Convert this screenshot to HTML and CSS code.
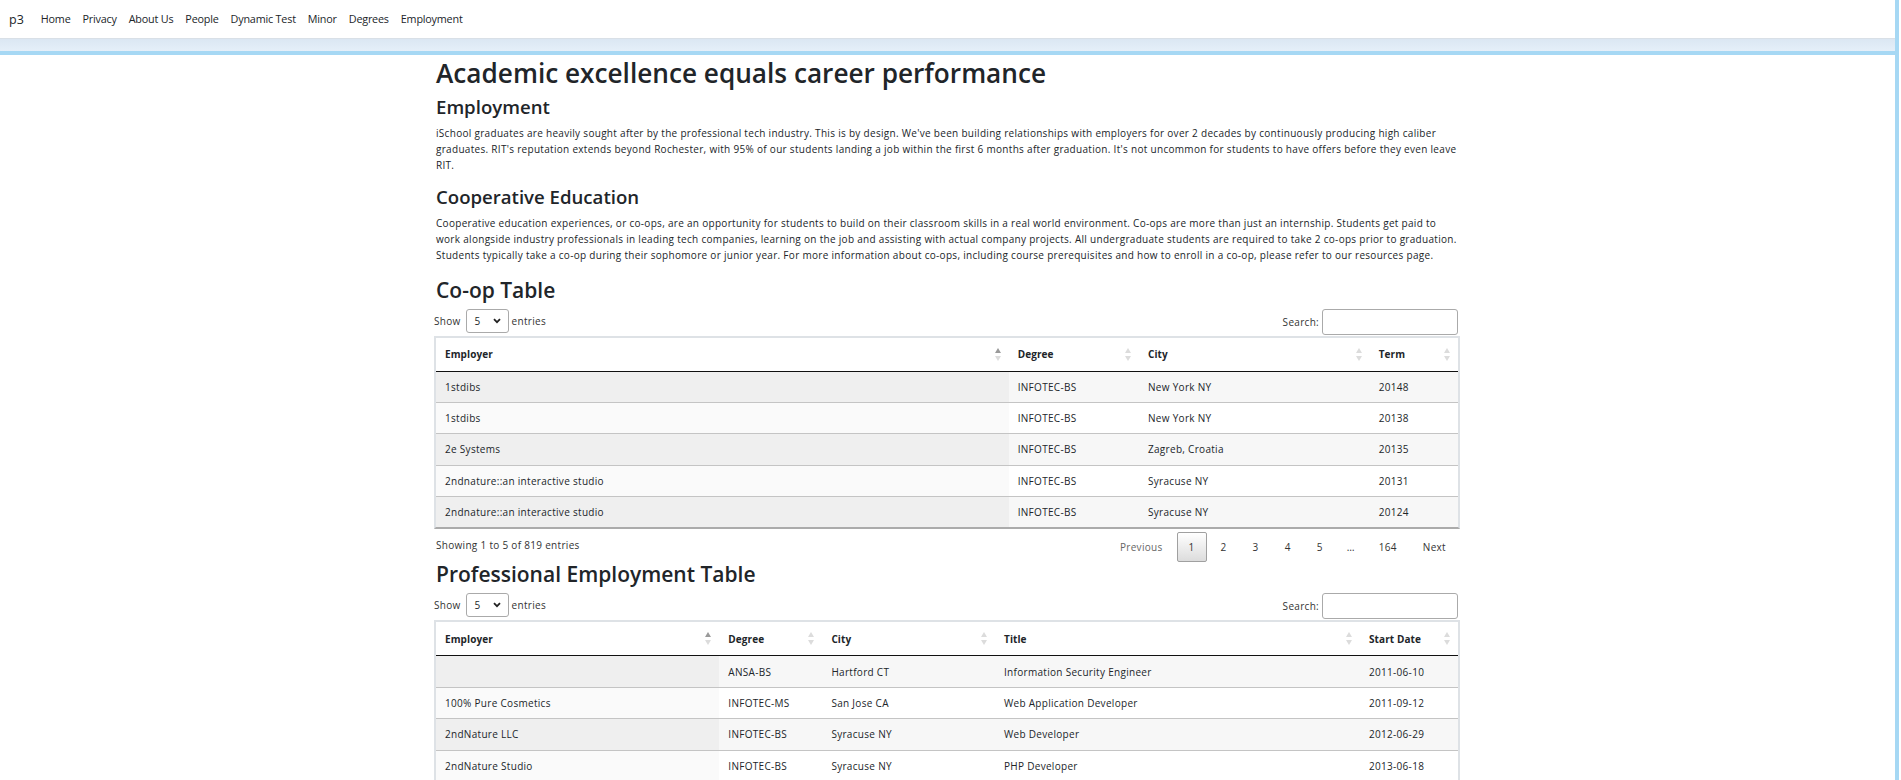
FILE: index.html
```html
<!DOCTYPE html>
<html lang="en">
<head>
<meta charset="utf-8">
<title>Employment</title>
<link rel="stylesheet" href="styles.css">
</head>
<body>
<div class="page">
  <div class="main">
    <header class="topbar">
      <nav class="navbar">
        <a class="brand" href="#">p3</a>
        <ul class="nav">
          <li><a href="#">Home</a></li>
          <li><a href="#">Privacy</a></li>
          <li><a href="#">About Us</a></li>
          <li><a href="#">People</a></li>
          <li><a href="#">Dynamic Test</a></li>
          <li><a href="#">Minor</a></li>
          <li><a href="#">Degrees</a></li>
          <li><a href="#">Employment</a></li>
        </ul>
      </nav>
      <div class="band"></div>
    </header>
    <div class="content">
      <main class="container">
        <h1>Academic excellence equals career performance</h1>
        <h3>Employment</h3>
        <p>iSchool graduates are heavily sought after by the professional tech industry. This is by design. We've been building relationships with employers for over 2 decades by continuously producing high caliber<br>graduates. RIT's reputation extends beyond Rochester, with 95% of our students landing a job within the first 6 months after graduation. It's not uncommon for students to have offers before they even leave<br>RIT.</p>
        <h3>Cooperative Education</h3>
        <p class="last-p">Cooperative education experiences, or co-ops, are an opportunity for students to build on their classroom skills in a real world environment. Co-ops are more than just an internship. Students get paid to<br>work alongside industry professionals in leading tech companies, learning on the job and assisting with actual company projects. All undergraduate students are required to take 2 co-ops prior to graduation.<br>Students typically take a co-op during their sophomore or junior year. For more information about co-ops, including course prerequisites and how to enroll in a co-op, please refer to our resources page.</p>

        <h2 class="table-title">Co-op Table</h2>
        <div class="dt">
          <div class="dt-top">
            <label class="len">Show <span class="select"><span>5</span><svg width="8" height="6" viewBox="0 0 8 6"><path d="M1 1.2 L4 4.2 L7 1.2" fill="none" stroke="#222" stroke-width="1.8"/></svg></span> entries</label>
            <label class="filter">Search:<input class="search" type="text"></label>
          </div>
          <table class="grid t1">
            <colgroup><col class="c1"><col class="c2"><col class="c3"><col class="c4"></colgroup>
            <thead>
              <tr>
                <th><div class="th-in">Employer<span class="sort asc"></span></div></th>
                <th><div class="th-in">Degree<span class="sort"></span></div></th>
                <th><div class="th-in">City<span class="sort"></span></div></th>
                <th><div class="th-in">Term<span class="sort"></span></div></th>
              </tr>
            </thead>
            <tbody>
              <tr><td class="sorted">1stdibs</td><td>INFOTEC-BS</td><td>New York NY</td><td>20148</td></tr>
              <tr><td class="sorted">1stdibs</td><td>INFOTEC-BS</td><td>New York NY</td><td>20138</td></tr>
              <tr><td class="sorted">2e Systems</td><td>INFOTEC-BS</td><td>Zagreb, Croatia</td><td>20135</td></tr>
              <tr><td class="sorted">2ndnature::an interactive studio</td><td>INFOTEC-BS</td><td>Syracuse NY</td><td>20131</td></tr>
              <tr><td class="sorted">2ndnature::an interactive studio</td><td>INFOTEC-BS</td><td>Syracuse NY</td><td>20124</td></tr>
            </tbody>
          </table>
          <div class="dt-bottom">
            <div class="info">Showing 1 to 5 of 819 entries</div>
            <div class="pager">
              <span class="pbtn disabled">Previous</span>
              <span class="pbtn current">1</span>
              <span class="pbtn">2</span>
              <span class="pbtn">3</span>
              <span class="pbtn">4</span>
              <span class="pbtn">5</span>
              <span class="ellipsis">…</span>
              <span class="pbtn">164</span>
              <span class="pbtn">Next</span>
            </div>
          </div>
        </div>

        <h2 class="table-title">Professional Employment Table</h2>
        <div class="dt">
          <div class="dt-top">
            <label class="len">Show <span class="select"><span>5</span><svg width="8" height="6" viewBox="0 0 8 6"><path d="M1 1.2 L4 4.2 L7 1.2" fill="none" stroke="#222" stroke-width="1.8"/></svg></span> entries</label>
            <label class="filter">Search:<input class="search" type="text"></label>
          </div>
          <table class="grid t2">
            <colgroup><col class="c1"><col class="c2"><col class="c3"><col class="c4"><col class="c5"></colgroup>
            <thead>
              <tr>
                <th><div class="th-in">Employer<span class="sort asc"></span></div></th>
                <th><div class="th-in">Degree<span class="sort"></span></div></th>
                <th><div class="th-in">City<span class="sort"></span></div></th>
                <th><div class="th-in">Title<span class="sort"></span></div></th>
                <th><div class="th-in">Start Date<span class="sort"></span></div></th>
              </tr>
            </thead>
            <tbody>
              <tr><td class="sorted"></td><td>ANSA-BS</td><td>Hartford CT</td><td>Information Security Engineer</td><td>2011-06-10</td></tr>
              <tr><td class="sorted">100% Pure Cosmetics</td><td>INFOTEC-MS</td><td>San Jose CA</td><td>Web Application Developer</td><td>2011-09-12</td></tr>
              <tr><td class="sorted">2ndNature LLC</td><td>INFOTEC-BS</td><td>Syracuse NY</td><td>Web Developer</td><td>2012-06-29</td></tr>
              <tr><td class="sorted">2ndNature Studio</td><td>INFOTEC-BS</td><td>Syracuse NY</td><td>PHP Developer</td><td>2013-06-18</td></tr>
            </tbody>
          </table>
        </div>
      </main>
    </div>
  </div>
  <div class="rail"></div>
</div>
</body>
</html>
```

FILE: styles.css
```css
* { box-sizing: border-box; }

html, body {
  margin: 0;
  padding: 0;
  overflow: hidden;
  background: #fff;
}

body {
  font-family: "Open Sans", "Segoe UI", "Noto Sans", sans-serif;
  font-size: 10px;
  letter-spacing: 0.3px;
  line-height: 16px;
  color: #212529;
}

.page {
  display: flex;
  height: 780px;
}

.main {
  flex: 1;
  min-width: 0;
}

.rail {
  width: 4px;
  margin-right: 2px;
  background: #a6d8f4;
}

/* ---------- top bar ---------- */
.navbar {
  height: 39px;
  display: flex;
  align-items: center;
  padding: 0 9px;
  background: #fff;
  border-bottom: 1px solid #d9e0e7;
  letter-spacing: 0;
}

.brand {
  font-size: 12.5px;
  line-height: 20px;
  color: #212529;
  text-decoration: none;
  margin-right: 11px;
  padding-top: 1px;
}

.nav {
  display: flex;
  list-style: none;
  margin: 0;
  padding: 0;
}

.nav a {
  display: block;
  padding: 0 6px;
  font-size: 10.8px;
  letter-spacing: -0.2px;
  line-height: 18px;
  color: #212529;
  text-decoration: none;
}

.band {
  height: 16px;
  background: linear-gradient(#dbe7f3, #e5eff9);
  border-bottom: 4px solid #a6d8f4;
}

/* ---------- content ---------- */
.content {
  display: flex;
  justify-content: center;
  padding-right: 3px;
}

.container {
  width: 1020px;
}

h1 {
  margin: 0 0 3px;
  font-size: 26.2px;
  line-height: 36px;
  font-weight: 600;
  letter-spacing: 0;
  color: #212529;
}

h2,
h3 {
  margin: 0 0 6px;
  font-size: 18.6px;
  line-height: 25px;
  font-weight: 600;
  letter-spacing: 0;
  color: #212529;
}

h2.table-title {
  font-size: 21px;
}

p {
  margin: 0 0 11px;
  white-space: nowrap;
}

p.last-p {
  margin-bottom: 14.5px;
}

/* ---------- data tables ---------- */
.dt {
  margin: 0 -2px;
}

.dt-top {
  display: flex;
  justify-content: space-between;
  align-items: flex-start;
  height: 27px;
  color: #333;
}

.len {
  display: flex;
  align-items: center;
  height: 24px;
}

.select {
  display: inline-flex;
  align-items: center;
  justify-content: space-between;
  width: 43px;
  height: 24px;
  margin: 0 3px 0 5px;
  padding: 0 7px 0 8px;
  border: 1px solid #aaa;
  border-radius: 3px;
  background: #fff;
  color: #212529;
}

.filter {
  display: flex;
  align-items: center;
  height: 26px;
}

.search {
  width: 136px;
  height: 26px;
  margin: 0 0 0 3px;
  padding: 2px 4px;
  border: 1px solid #aaa;
  border-radius: 3px;
  background: #fff;
  font: inherit;
}

.grid {
  width: 100%;
  table-layout: fixed;
  border-collapse: separate;
  border-spacing: 0;
  border: 2px solid #dee2e6;
  border-bottom: 2px solid #ababab;
}

.t1 .c1 { width: 572.7px; }
.t1 .c2 { width: 130.3px; }
.t1 .c3 { width: 230.7px; }
.t1 .c4 { width: 88.3px; }

.t2 .c1 { width: 283.3px; }
.t2 .c2 { width: 103.1px; }
.t2 .c3 { width: 172.6px; }
.t2 .c4 { width: 365px; }
.t2 .c5 { width: 98px; }

.grid th {
  padding: 8.5px 7px 8.5px 9px;
  text-align: left;
  font-weight: 700;
  letter-spacing: 0.1px;
  color: #212529;
  background: #fff;
  border-bottom: 1px solid #111;
}

.th-in {
  display: flex;
  align-items: center;
  justify-content: space-between;
}

.sort {
  display: flex;
  flex-direction: column;
  gap: 3px;
  width: 7px;
}

.sort::before,
.sort::after {
  content: "";
  display: block;
  width: 0;
  height: 0;
  border-left: 3.5px solid transparent;
  border-right: 3.5px solid transparent;
}

.sort::before { border-bottom: 5px solid #dcdcdc; }
.sort::after { border-top: 5px solid #dcdcdc; }
.sort.asc::before { border-bottom-color: #9a9a9a; }

.grid td {
  padding: 7.2px 9px;
  height: 30.4px;
  color: #212529;
  white-space: nowrap;
  overflow: hidden;
  border-top: 1px solid #c4c4c4;
}

.grid tbody tr:first-child td { border-top: none; }

.grid tbody tr:nth-child(odd) td { background: #f7f7f7; }
.grid tbody tr:nth-child(odd) td.sorted { background: #efefef; }
.grid tbody tr:nth-child(even) td { background: #fff; }
.grid tbody tr:nth-child(even) td.sorted { background: #fafafa; }

.dt-bottom {
  display: flex;
  justify-content: space-between;
  align-items: flex-start;
  margin-top: 3px;
  color: #333;
}

.info {
  padding: 5px 0 0 2px;
}

.pager {
  display: flex;
  align-items: center;
}

.pbtn {
  margin-left: 2px;
  padding: 6px 11px;
  border: 1px solid transparent;
  border-radius: 2px;
  color: #333;
  line-height: 16px;
}

.pbtn.disabled { color: #666; }

.pbtn.current {
  border-color: #a0a0a0;
  background: linear-gradient(#fff, #dcdcdc);
}

.ellipsis {
  margin-left: 2px;
  padding: 0 10px;
  color: #333;
}
```
